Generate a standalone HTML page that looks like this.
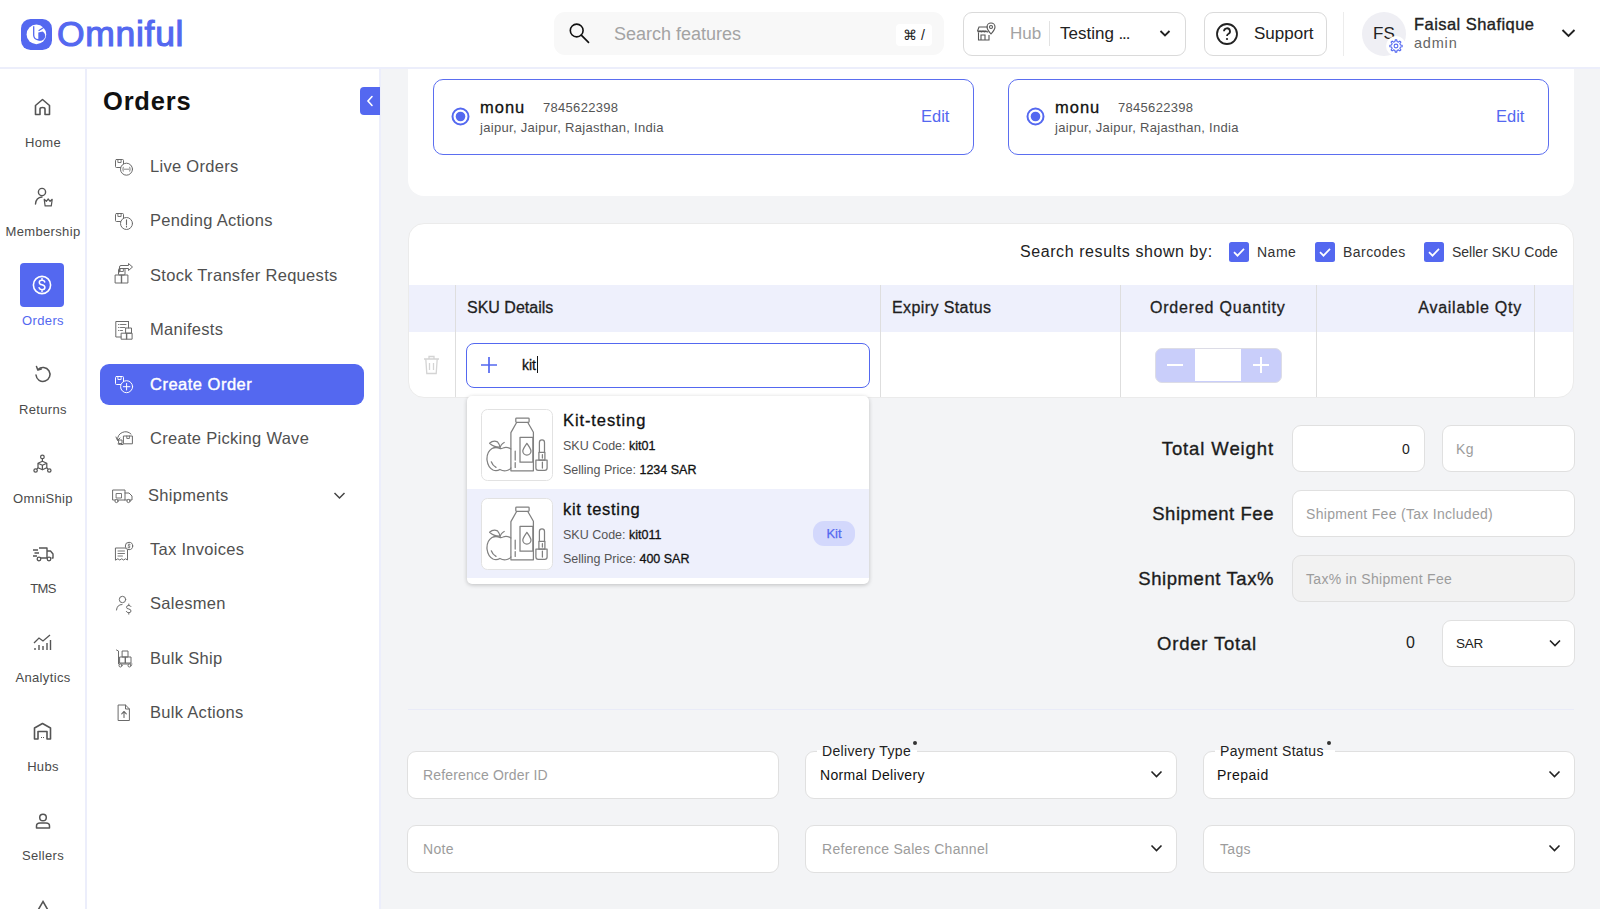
<!DOCTYPE html>
<html><head><meta charset="utf-8">
<style>
*{box-sizing:border-box;margin:0;padding:0}
html,body{width:1600px;height:909px;overflow:hidden;background:#f3f4f6;font-family:"Liberation Sans",sans-serif;color:#222}
.a{position:absolute}
svg{display:block}
/* header */
#hdr{left:0;top:0;width:1600px;height:69px;background:#fff;border-bottom:2px solid #eceefb}
.logo-t{left:57px;top:14px;font-size:35.5px;color:#5468f0;-webkit-text-stroke:1.1px #5468f0;letter-spacing:0.7px}
.med{-webkit-text-stroke:0.3px currentColor}
#search{left:554px;top:12px;width:390px;height:43px;background:#f8f8f8;border-radius:11px}
.ph{color:#a3a3a3}
.box{background:#fff;border:1px solid #dadada;border-radius:9px}
/* sidebar1 */
#sb1{left:0;top:69px;width:87px;height:840px;background:#fff;border-right:2px solid #eceefb}
.sb1i{position:absolute;left:0;width:86px;text-align:center;font-size:13px;color:#4a4a4a;letter-spacing:0.35px}
/* sidebar2 */
#sb2{left:87px;top:69px;width:294px;height:840px;background:#fff;border-right:2px solid #eceefb}
.mi{position:absolute;left:150px;font-size:16.5px;color:#505050;white-space:nowrap;letter-spacing:0.3px;margin-top:1px}
.mic{position:absolute;left:114px}
/* content */
.card{background:#fff;border-radius:16px}
.addr{background:#fff;border:1.5px solid #5b6ef0;border-radius:10px}
.th{font-size:16px;color:#1f1f1f;white-space:nowrap;-webkit-text-stroke:0.3px #1f1f1f}
.lbl{font-size:18.5px;color:#1c1c1c;white-space:nowrap;text-align:right;-webkit-text-stroke:0.35px #1c1c1c}
.inp{background:#fff;border:1.3px solid #e0e0e0;border-radius:9px}
.pht{font-size:14px;color:#9c9c9c;white-space:nowrap;letter-spacing:0.3px}
</style></head><body>

<!-- HEADER -->
<div id="hdr" class="a"></div>
<svg class="a" style="left:21px;top:18.5px" width="31" height="31" viewBox="0 0 31 31">
 <rect x="0" y="0" width="31" height="31" rx="9.5" fill="#5468f0"/>
 <circle cx="15.4" cy="15.4" r="9.8" fill="#fff"/>
 <path d="M12.7 7.2 V16.3 A4.7 4.7 0 0 0 22 17 A5 5 0 0 0 21.3 13.5" fill="none" stroke="#5468f0" stroke-width="1.3"/>
 <path d="M17.3 13.6 L21.6 12.6 A4.8 4.8 0 0 1 17.3 21.2 Z" fill="#5468f0"/>
 <path d="M17.6 11.8 L24.2 7.6" stroke="#5468f0" stroke-width="1.2"/>
</svg>
<div class="a logo-t">Omniful</div>

<div id="search" class="a"></div>
<svg class="a" style="left:565px;top:20px" width="26" height="26" viewBox="0 0 26 26"><circle cx="11.7" cy="10.5" r="6.4" fill="none" stroke="#111" stroke-width="1.6"/><path d="M16.3 15.2 L23.5 22.4" stroke="#111" stroke-width="1.7" stroke-linecap="round"/></svg>
<div class="a ph" style="left:614px;top:24px;font-size:18px">Search features</div>
<div class="a" style="left:896px;top:24px;width:36px;height:22px;background:#fff;border-radius:4px;font-size:14px;color:#222;text-align:center;line-height:22px">&#8984; /</div>

<div class="a box" style="left:963px;top:12px;width:223px;height:44px"></div>
<svg class="a" style="left:976px;top:22px" width="20" height="19" viewBox="0 0 20 19"><g fill="none" stroke="#555" stroke-width="1.1"><path d="M1.5 9 L3 5 H12 M1.5 9 Q2.5 11 4 9 Q5.5 11 7 9 Q8.5 11 10 9 Q11 10.5 12 9.5 M1.5 9 H10"/><path d="M2.5 10.5 V18 H13 V13 M5 18 V13 H9 V18"/><path d="M15 12 Q11 7.5 11 5 A4 4 0 0 1 19 5 Q19 7.5 15 12 Z"/><circle cx="15" cy="5" r="1.5"/></g></svg>
<div class="a ph" style="left:1010px;top:24px;font-size:17px">Hub</div>
<div class="a" style="left:1049px;top:21px;width:1px;height:25px;background:#e2e2e2"></div>
<div class="a" style="left:1060px;top:24px;font-size:17px;color:#222">Testing <span style="letter-spacing:-1.2px">...</span></div>
<svg class="a" style="left:1159px;top:29px" width="12" height="9" viewBox="0 0 12 9"><path d="M1.5 2 L6 6.5 L10.5 2" stroke="#222" stroke-width="1.8" fill="none"/></svg>

<div class="a box" style="left:1204px;top:12px;width:123px;height:44px"></div>
<svg class="a" style="left:1215px;top:22px" width="24" height="24" viewBox="0 0 24 24"><circle cx="12" cy="12" r="10" fill="none" stroke="#222" stroke-width="1.8"/><path d="M9 9.3 a3 3 0 1 1 4.2 2.7 c-1 .5 -1.2 1 -1.2 2" stroke="#222" stroke-width="1.8" fill="none"/><circle cx="12" cy="17" r="1.1" fill="#222"/></svg>
<div class="a" style="left:1254px;top:24px;font-size:17px;color:#222">Support</div>

<div class="a" style="left:1343px;top:12px;width:1px;height:44px;background:#ececec"></div>
<div class="a" style="left:1362px;top:12px;width:44px;height:44px;border-radius:50%;background:#efeff4"></div>
<div class="a" style="left:1373px;top:24px;font-size:17px;color:#222">FS</div>
<div class="a" style="left:1385.5px;top:35.5px;width:20px;height:20px;border-radius:50%;background:#fff"></div>
<svg class="a" style="left:1388.5px;top:38.5px" width="14" height="14" viewBox="0 0 14 14"><path d="M11.49 6.01 L13.15 6.20 L13.15 7.80 L11.49 7.99 L10.87 9.48 L11.91 10.78 L10.78 11.91 L9.48 10.87 L7.99 11.49 L7.80 13.15 L6.20 13.15 L6.01 11.49 L4.52 10.87 L3.22 11.91 L2.09 10.78 L3.13 9.48 L2.51 7.99 L0.85 7.80 L0.85 6.20 L2.51 6.01 L3.13 4.52 L2.09 3.22 L3.22 2.09 L4.52 3.13 L6.01 2.51 L6.20 0.85 L7.80 0.85 L7.99 2.51 L9.48 3.13 L10.78 2.09 L11.91 3.22 L10.87 4.52 Z" fill="none" stroke="#5468f0" stroke-width="1.1" stroke-linejoin="round"/><circle cx="7" cy="7" r="1.9" fill="none" stroke="#5468f0" stroke-width="1.1"/></svg>
<div class="a" style="left:1414px;top:15px;font-size:16.5px;color:#222;letter-spacing:0.45px;-webkit-text-stroke:0.35px #222">Faisal Shafique</div>
<div class="a" style="left:1414px;top:35px;font-size:14.5px;color:#666;letter-spacing:0.8px">admin</div>
<svg class="a" style="left:1561px;top:28px" width="15" height="10" viewBox="0 0 15 10"><path d="M1.5 2 L7.5 8 L13.5 2" stroke="#222" stroke-width="1.9" fill="none"/></svg>

<!-- SIDEBAR 1 -->
<div id="sb1" class="a"></div>
<!-- home -->
<svg class="a" style="left:34px;top:98px" width="17" height="18" viewBox="0 0 17 18"><path d="M1.5 16.5 V7.5 L8.5 1.5 L15.5 7.5 V16.5 H11 V11 Q11 9.5 8.5 9.5 Q6 9.5 6 11 V16.5 Z" fill="none" stroke="#555" stroke-width="1.6" stroke-linejoin="round"/></svg>
<div class="sb1i" style="top:135px">Home</div>
<!-- membership -->
<svg class="a" style="left:34px;top:187px" width="19" height="20" viewBox="0 0 19 20"><circle cx="8" cy="5" r="3.6" fill="none" stroke="#555" stroke-width="1.4"/><path d="M1.5 17 Q2 10.5 8 10" fill="none" stroke="#555" stroke-width="1.4" stroke-linecap="round"/><path d="M10.2 12.3 L12.3 14.3 L14.2 12 L16.1 14.3 L18.2 12.3 L17.3 18.8 H11.1 Z" fill="none" stroke="#555" stroke-width="1.2" stroke-linejoin="round"/></svg>
<div class="sb1i" style="top:224px">Membership</div>
<!-- orders active -->
<div class="a" style="left:20px;top:263px;width:44px;height:44px;background:#5468f0;border-radius:4px"></div>
<svg class="a" style="left:32px;top:275px" width="20" height="20" viewBox="0 0 20 20"><circle cx="10" cy="10" r="8.6" fill="none" stroke="#fff" stroke-width="1.6"/><path d="M12.8 7 Q12.3 5.3 10 5.3 Q7.3 5.3 7.3 7.4 Q7.3 9.2 10 9.8 Q12.9 10.4 12.9 12.5 Q12.9 14.7 10 14.7 Q7.6 14.7 7.1 12.8 M10 3.6 V5.3 M10 14.7 V16.4" fill="none" stroke="#fff" stroke-width="1.5" stroke-linecap="round"/></svg>
<div class="sb1i" style="top:313px;color:#5468f0">Orders</div>
<!-- returns -->
<svg class="a" style="left:34px;top:365px" width="18" height="19" viewBox="0 0 18 19"><path d="M4 4.5 A7 7 0 1 1 2 10" fill="none" stroke="#555" stroke-width="1.5" stroke-linecap="round"/><path d="M2.5 1.5 L3.8 5 L7.3 4" fill="none" stroke="#555" stroke-width="1.5" stroke-linecap="round" stroke-linejoin="round"/></svg>
<div class="sb1i" style="top:402px">Returns</div>
<!-- omniship -->
<svg class="a" style="left:25px;top:445px" width="36" height="36" viewBox="0 0 36 36"><g fill="none" stroke="#555" stroke-width="1.25" stroke-linejoin="round"><circle cx="17.4" cy="11.9" r="1.8"/><path d="M17.4 13.7 V16.2"/><path d="M17.4 16.2 L13 18.3 V22.8 L17.4 24.8 L21.8 22.8 V18.3 Z M13 18.3 L17.4 20.3 L21.8 18.3 M17.4 20.3 V24.8"/><path d="M13 22.8 L11.8 24.2 M21.8 22.8 L23 24.2"/><circle cx="10.6" cy="25.5" r="1.7"/><circle cx="24.3" cy="25.5" r="1.7"/></g></svg>
<div class="sb1i" style="top:491px">OmniShip</div>
<!-- tms -->
<svg class="a" style="left:32px;top:546px" width="22" height="16" viewBox="0 0 22 16"><path d="M7 2 H15 V12 H8 M15 5 H18.5 L21 8 V12 H19.5" fill="none" stroke="#555" stroke-width="1.4" stroke-linejoin="round"/><path d="M1 4 H6 M2.5 7 H7 M1 10 H5" stroke="#555" stroke-width="1.3"/><circle cx="7" cy="13" r="1.8" fill="#fff" stroke="#555" stroke-width="1.3"/><circle cx="17" cy="13" r="1.8" fill="#fff" stroke="#555" stroke-width="1.3"/></svg>
<div class="sb1i" style="top:581px;letter-spacing:-0.6px">TMS</div>
<!-- analytics -->
<svg class="a" style="left:33px;top:634px" width="19" height="17" viewBox="0 0 19 17"><path d="M1 9 L6 4 L10 7 L17 1" fill="none" stroke="#555" stroke-width="1.3"/><path d="M2 14 V16 M6 11 V16 M10 12 V16 M14 9 V16 M17.5 6 V16" stroke="#555" stroke-width="1.4"/></svg>
<div class="sb1i" style="top:670px">Analytics</div>
<!-- hubs -->
<svg class="a" style="left:33px;top:722px" width="19" height="18" viewBox="0 0 19 18"><path d="M1.5 17 V6 L9.5 1.5 L17.5 6 V17 H14 V9.5 H5 V17 Z" fill="none" stroke="#555" stroke-width="1.6" stroke-linejoin="round"/><path d="M8 15.5 H11" stroke="#555" stroke-width="1.2" stroke-dasharray="1 1"/></svg>
<div class="sb1i" style="top:759px">Hubs</div>
<!-- sellers -->
<svg class="a" style="left:35px;top:813px" width="16" height="16" viewBox="0 0 16 16"><circle cx="8" cy="4.5" r="3.3" fill="none" stroke="#555" stroke-width="1.5"/><path d="M1.5 15 V13 Q1.5 10 5 10 H11 Q14.5 10 14.5 13 V15 Z" fill="none" stroke="#555" stroke-width="1.5" stroke-linejoin="round"/></svg>
<div class="sb1i" style="top:848px">Sellers</div>
<svg class="a" style="left:36px;top:900px" width="14" height="12" viewBox="0 0 14 12"><path d="M7 1.5 L12.5 11 H1.5 Z" fill="none" stroke="#555" stroke-width="1.5"/></svg>


<!-- SIDEBAR 2 -->
<div id="sb2" class="a"></div>
<div class="a" style="left:103px;top:87px;font-size:25.5px;font-weight:bold;color:#111;letter-spacing:0.8px">Orders</div>
<div class="a" style="left:360px;top:87px;width:20px;height:28px;background:#5468f0;border-radius:4px 0 0 4px"></div>
<svg class="a" style="left:365px;top:95px" width="10" height="12" viewBox="0 0 10 12"><path d="M7 1.5 L3 6 L7 10.5" fill="none" stroke="#fff" stroke-width="1.6" stroke-linecap="round"/></svg>

<!-- live orders -->
<div class="mi" style="top:156px">Live Orders</div>
<!-- pending -->
<div class="mi" style="top:210px">Pending Actions</div>
<!-- stock transfer -->
<div class="mi" style="top:265px">Stock Transfer Requests</div>
<!-- manifests -->
<div class="mi" style="top:319px">Manifests</div>
<!-- create order active -->
<div class="a" style="left:100px;top:364px;width:264px;height:41px;background:#5468f0;border-radius:9px"></div>
<div class="mi" style="top:374px;color:#fff;-webkit-text-stroke:0.4px #fff;letter-spacing:0.5px">Create Order</div>
<!-- picking wave -->
<div class="mi" style="top:428px">Create Picking Wave</div>
<!-- shipments -->
<div class="mi" style="left:148px;top:485px">Shipments</div>
<svg class="a" style="left:333px;top:491px" width="13" height="9" viewBox="0 0 13 9"><path d="M1.5 2 L6.5 7 L11.5 2" fill="none" stroke="#444" stroke-width="1.5"/></svg>
<!-- tax invoices -->
<div class="mi" style="top:539px">Tax Invoices</div>
<!-- salesmen -->
<div class="mi" style="top:593px">Salesmen</div>
<!-- bulk ship -->
<div class="mi" style="top:648px">Bulk Ship</div>
<!-- bulk actions -->
<div class="mi" style="top:702px">Bulk Actions</div>


<svg class="a" style="left:0;top:0" width="380" height="909" viewBox="0 0 380 909"><g fill="none" stroke="#6a6a6a" stroke-width="1" stroke-linejoin="round" stroke-linecap="round">
<rect x="115.5" y="159.5" width="8" height="8" rx="1" fill="none" stroke="#6a6a6a"/><path d="M117.9 159.5 V162.5 H121.1 V159.5" fill="none" stroke="#6a6a6a" stroke-width="0.9"/><circle cx="126.5" cy="169.2" r="6" fill="#fff"/><path d="M124 169.2 H129 M123.2 167.2 Q122.4 169.2 123.2 171.2 M129.8 167.2 Q130.6 169.2 129.8 171.2" stroke-width="0.8"/>
<rect x="115.5" y="213.5" width="8" height="8" rx="1" fill="none" stroke="#6a6a6a"/><path d="M117.9 213.5 V216.5 H121.1 V213.5" fill="none" stroke="#6a6a6a" stroke-width="0.9"/><circle cx="126.5" cy="223.5" r="6" fill="#fff"/><path d="M126.5 219.8 V224.5 M126.5 226 V227" stroke-width="1.1"/>
<path d="M119.5 272 V267 Q119.5 265.5 121 265.5 H128.5 V263.5 L132.5 267 L128.5 270.5 V268.5 H122.5"/>
<rect x="118.5" y="268.5" width="6.5" height="6.5" rx="1" fill="none" stroke="#6a6a6a"/><path d="M120.15 268.5 V271.5 H123.35 V268.5" fill="none" stroke="#6a6a6a" stroke-width="0.9"/><rect x="115.5" y="275" width="6.2" height="8"/><rect x="121.7" y="275" width="6.2" height="8"/>
<path d="M124 321.5 H115.8 V337 H121 M128.5 321.5 V328 M124 321.5 H128.5"/><path d="M118.5 324.5 H119 M120.5 324.5 H126 M118.5 327.5 H119 M120.5 327.5 H125 M118.5 330.5 H119 M120.5 330.5 H122.5" stroke-width="0.9"/>
<rect x="121.5" y="333.2" width="5.3" height="6"/><rect x="126.8" y="333.2" width="5.3" height="6"/><rect x="126" y="328" width="5.5" height="5.2"/>
<rect x="115.5" y="376.5" width="8" height="8" rx="1" fill="none" stroke="#fff"/><path d="M117.9 376.5 V379.5 H121.1 V376.5" fill="none" stroke="#fff" stroke-width="0.9"/><circle cx="126.6" cy="386.7" r="6" fill="#5468f0" stroke="#fff"/><path d="M123.3 386.7 H129.9 M126.6 383.4 V390" stroke="#fff"/>
<path d="M117.5 440 A8 8 0 0 1 131 434" /><path d="M116 437 L117.5 440.5 L120 438"/><path d="M118 444 A8 8 0 0 0 123 444.5"/>
<rect x="123.8" y="436" width="8.6" height="7.8"/><path d="M126.8 436 V438.5 H129.4 V436" stroke-width="0.9"/><rect x="119" y="440" width="3" height="3.5"/>
<rect x="113" y="490" width="12" height="10"/><path d="M125 493 H129 L132 496 V500 H125"/><rect x="116.5" y="493.5" width="5" height="4.5" stroke-width="0.9"/><circle cx="116.5" cy="501" r="1.6" fill="#fff"/><circle cx="128.5" cy="501" r="1.6" fill="#fff"/>
<path d="M115.8 548 H127.5 V560 L125.5 558.8 L123.6 560 L121.7 558.8 L119.8 560 L117.8 558.8 L115.8 560 Z"/><path d="M118 551 H124.5 M118 553.5 H124.5 M118 556 H122.5" stroke-width="0.9"/><circle cx="129" cy="546" r="3.7" fill="#fff"/><path d="M129 543.8 V548.2 M130.2 544.6 Q129 544 128.2 544.8 Q127.8 545.8 129 546 Q130.3 546.3 129.9 547.3 Q129 548 127.9 547.4" stroke-width="0.7"/>
<circle cx="122.5" cy="599.5" r="3.2"/><path d="M116.5 610 Q117 604.5 122 604.5"/><path d="M131 606.5 Q130.5 605.5 128.8 605.5 Q126.5 605.5 126.5 607.2 Q126.5 608.8 128.8 609 Q131 609.3 131 611 Q131 612.7 128.8 612.7 Q126.8 612.7 126.3 611.5 M128.8 604 V605.5 M128.8 612.7 V614.2"/>
<path d="M116.5 650 L118.5 651 V664 H132"/><rect x="120" y="657" width="5.5" height="6"/><rect x="125.5" y="657" width="5.5" height="6"/><rect x="122.5" y="651" width="5.5" height="6"/><circle cx="120.5" cy="665.5" r="1.5" fill="#fff"/><circle cx="129.5" cy="665.5" r="1.5" fill="#fff"/>
<path d="M118.5 705 H125.5 L129.4 709 V720.5 H118.5 Z M125.5 705 V709 H129.4"/><path d="M124 717.5 V711.5 M121.7 713.8 L124 711.5 L126.3 713.8" stroke-width="1.1"/>
</g></svg>
<!-- CONTENT -->
<!-- top card -->
<div class="a card" style="left:408px;top:69px;width:1166px;height:127px;border-radius:0 0 16px 16px"></div>
<div class="a addr" style="left:433px;top:79px;width:541px;height:76px"></div>
<svg class="a" style="left:451px;top:107px" width="19" height="19" viewBox="0 0 19 19"><circle cx="9.5" cy="9.5" r="8" fill="none" stroke="#5468f0" stroke-width="2"/><circle cx="9.5" cy="9.5" r="4.8" fill="#5468f0"/></svg>
<div class="a med" style="left:480px;top:98px;font-size:16.5px;color:#111;letter-spacing:1px">monu</div>
<div class="a" style="left:543px;top:100px;font-size:13px;color:#555;letter-spacing:0.3px">7845622398</div>
<div class="a" style="left:480px;top:120px;font-size:13px;color:#555;letter-spacing:0.3px">jaipur, Jaipur, Rajasthan, India</div>
<div class="a" style="left:921px;top:107px;font-size:16.5px;color:#5468f0">Edit</div>

<div class="a addr" style="left:1008px;top:79px;width:541px;height:76px"></div>
<svg class="a" style="left:1026px;top:107px" width="19" height="19" viewBox="0 0 19 19"><circle cx="9.5" cy="9.5" r="8" fill="none" stroke="#5468f0" stroke-width="2"/><circle cx="9.5" cy="9.5" r="4.8" fill="#5468f0"/></svg>
<div class="a med" style="left:1055px;top:98px;font-size:16.5px;color:#111;letter-spacing:1px">monu</div>
<div class="a" style="left:1118px;top:100px;font-size:13px;color:#555;letter-spacing:0.3px">7845622398</div>
<div class="a" style="left:1055px;top:120px;font-size:13px;color:#555;letter-spacing:0.3px">jaipur, Jaipur, Rajasthan, India</div>
<div class="a" style="left:1496px;top:107px;font-size:16.5px;color:#5468f0">Edit</div>

<!-- sku card -->
<div class="a card" style="left:408px;top:223px;width:1166px;height:175px;overflow:hidden;border:1px solid #ebebeb">
  <div class="a" style="left:0;top:61px;width:1166px;height:47px;background:#eef0fc"></div>
  <div class="a" style="left:46px;top:61px;width:1px;height:113px;background:#dedede"></div>
  <div class="a" style="left:471px;top:61px;width:1px;height:113px;background:#dedede"></div>
  <div class="a" style="left:711px;top:61px;width:1px;height:113px;background:#dedede"></div>
  <div class="a" style="left:907px;top:61px;width:1px;height:113px;background:#dedede"></div>
  <div class="a" style="left:1125px;top:61px;width:1px;height:113px;background:#dedede"></div>
</div>
<div class="a" style="left:1020px;top:243px;font-size:16px;color:#222;letter-spacing:0.58px">Search results shown by:</div>
<svg class="a" style="left:1229px;top:242px" width="20" height="20" viewBox="0 0 20 20"><rect width="20" height="20" rx="2.5" fill="#5468f0"/><path d="M5 10.2 L8.5 13.7 L15 6.8" fill="none" stroke="#fff" stroke-width="1.7"/></svg>
<div class="a" style="left:1257px;top:244px;font-size:14px;color:#333;letter-spacing:0.5px">Name</div>
<svg class="a" style="left:1315px;top:242px" width="20" height="20" viewBox="0 0 20 20"><rect width="20" height="20" rx="2.5" fill="#5468f0"/><path d="M5 10.2 L8.5 13.7 L15 6.8" fill="none" stroke="#fff" stroke-width="1.7"/></svg>
<div class="a" style="left:1343px;top:244px;font-size:14px;color:#333;letter-spacing:0.45px">Barcodes</div>
<svg class="a" style="left:1424px;top:242px" width="20" height="20" viewBox="0 0 20 20"><rect width="20" height="20" rx="2.5" fill="#5468f0"/><path d="M5 10.2 L8.5 13.7 L15 6.8" fill="none" stroke="#fff" stroke-width="1.7"/></svg>
<div class="a" style="left:1452px;top:244px;font-size:14px;color:#333">Seller SKU Code</div>

<div class="a th" style="left:467px;top:299px">SKU Details</div>
<div class="a th" style="left:892px;top:299px;letter-spacing:0.4px">Expiry Status</div>
<div class="a th" style="left:1150px;top:299px;letter-spacing:0.8px">Ordered Quantity</div>
<div class="a th" style="left:1322px;width:200px;text-align:right;top:299px;letter-spacing:0.75px">Available Qty</div>

<svg class="a" style="left:423px;top:355px" width="17" height="20" viewBox="0 0 17 20"><path d="M1 4 H16 M6 4 V1.5 H11 V4 M2.8 4 L3.8 18.5 H13.2 L14.2 4 M6.5 8 V15 M10.5 8 V15" fill="none" stroke="#d4d4d4" stroke-width="1.3"/></svg>
<div class="a" style="left:466px;top:343px;width:404px;height:45px;background:#fff;border:1.3px solid #5468f0;border-radius:8px"></div>
<svg class="a" style="left:480px;top:356px" width="18" height="18" viewBox="0 0 18 18"><path d="M9 1 V17 M1 9 H17" stroke="#5468f0" stroke-width="1.7"/></svg>
<div class="a med" style="left:522px;top:357px;font-size:14px;color:#111">kit</div>
<div class="a" style="left:537px;top:356px;width:1px;height:17px;background:#111"></div>

<div class="a" style="left:1155px;top:348px;width:127px;height:35px;background:#c9cefa;border-radius:7px;border:1px solid #dcdce6"></div>
<div class="a" style="left:1195px;top:349px;width:46px;height:32px;background:#fff"></div>
<svg class="a" style="left:1165px;top:356px" width="20" height="18" viewBox="0 0 20 18"><path d="M2 9 H18" stroke="#fff" stroke-width="2"/></svg>
<svg class="a" style="left:1251px;top:355px" width="20" height="20" viewBox="0 0 20 20"><path d="M2 10 H18 M10 2 V18" stroke="#fff" stroke-width="2"/></svg>

<!-- dropdown -->
<div class="a" style="left:467px;top:396px;width:402px;height:188px;background:#fff;border-radius:5px;box-shadow:0 1px 4px rgba(0,0,0,0.22)"></div>
<div class="a" style="left:467px;top:489px;width:402px;height:89px;background:#eef0fc"></div>
<svg class="a" style="left:480.5px;top:409px" width="72" height="72" viewBox="0 0 72 72"><rect x="0.5" y="0.5" width="71" height="71" rx="6" fill="#fff" stroke="#e2e2e2"/>
<g fill="none" stroke="#808080" stroke-width="1.25" stroke-linejoin="round" stroke-linecap="round">
<rect x="34.8" y="9" width="13.3" height="4.3" rx="0.8"/>
<path d="M35.6 13.5 L29.9 23.6 V61.8 H52.4 V23.2 L46.8 13.5"/>
<rect x="39" y="28.3" width="12.9" height="24.9"/>
<path d="M45.9 34.3 Q41.8 40 41.8 42 A4.1 4.1 0 0 0 50 42 Q50 40 45.9 34.3 Z"/>
<path d="M34.2 42 V51 M34.2 53.5 V58.4"/>
<path d="M29.9 40 Q26 37.5 22 39 Q19 40 18.9 39.5 Q15 37.5 11 39.5 Q5.5 43 6 51 Q7 58.5 12 61 Q15.5 62.5 18.9 60.5 Q22.5 62.5 26 61.5 Q28.5 61 29.9 59"/>
<path d="M10.3 52.8 Q11.5 56.5 15 58.4"/>
<path d="M18.9 39.5 Q19.5 35.5 23.2 33.5"/>
<path d="M8.6 34.3 Q12 31 16.5 32.8 Q18.5 35 18.9 38.2 Q13 38.5 8.6 34.3 Z"/>
<path d="M58.4 43.3 V33.5 Q58.4 30.9 61 30.9 Q63.5 30.9 63.5 33.5 V43.3"/>
<rect x="57.9" y="43.3" width="6" height="7.7"/>
<path d="M54.9 51 H66.1 V59 Q66.1 61.4 63.7 61.4 H57.3 Q54.9 61.4 54.9 59 Z"/>
<path d="M61.4 45.5 V49 M61.4 53 V59"/>
</g></svg>
<svg class="a" style="left:480.5px;top:498px" width="72" height="72" viewBox="0 0 72 72"><rect x="0.5" y="0.5" width="71" height="71" rx="6" fill="#fff" stroke="#e2e2e2"/>
<g fill="none" stroke="#808080" stroke-width="1.25" stroke-linejoin="round" stroke-linecap="round">
<rect x="34.8" y="9" width="13.3" height="4.3" rx="0.8"/>
<path d="M35.6 13.5 L29.9 23.6 V61.8 H52.4 V23.2 L46.8 13.5"/>
<rect x="39" y="28.3" width="12.9" height="24.9"/>
<path d="M45.9 34.3 Q41.8 40 41.8 42 A4.1 4.1 0 0 0 50 42 Q50 40 45.9 34.3 Z"/>
<path d="M34.2 42 V51 M34.2 53.5 V58.4"/>
<path d="M29.9 40 Q26 37.5 22 39 Q19 40 18.9 39.5 Q15 37.5 11 39.5 Q5.5 43 6 51 Q7 58.5 12 61 Q15.5 62.5 18.9 60.5 Q22.5 62.5 26 61.5 Q28.5 61 29.9 59"/>
<path d="M10.3 52.8 Q11.5 56.5 15 58.4"/>
<path d="M18.9 39.5 Q19.5 35.5 23.2 33.5"/>
<path d="M8.6 34.3 Q12 31 16.5 32.8 Q18.5 35 18.9 38.2 Q13 38.5 8.6 34.3 Z"/>
<path d="M58.4 43.3 V33.5 Q58.4 30.9 61 30.9 Q63.5 30.9 63.5 33.5 V43.3"/>
<rect x="57.9" y="43.3" width="6" height="7.7"/>
<path d="M54.9 51 H66.1 V59 Q66.1 61.4 63.7 61.4 H57.3 Q54.9 61.4 54.9 59 Z"/>
<path d="M61.4 45.5 V49 M61.4 53 V59"/>
</g></svg>

<div style="left:563px;top:411px;font-size:16.5px;color:#111;letter-spacing:0.9px" class="a med">Kit-testing</div>
<div class="a" style="left:563px;top:439px;font-size:12.5px;color:#555">SKU Code: <span class="med" style="color:#111">kit01</span></div>
<div class="a" style="left:563px;top:463px;font-size:12.5px;color:#555">Selling Price: <span class="med" style="color:#111">1234 SAR</span></div>
<div style="left:563px;top:500px;font-size:16.5px;color:#111;letter-spacing:0.7px" class="a med">kit testing</div>
<div class="a" style="left:563px;top:528px;font-size:12.5px;color:#555">SKU Code: <span class="med" style="color:#111">kit011</span></div>
<div class="a" style="left:563px;top:552px;font-size:12.5px;color:#555">Selling Price: <span class="med" style="color:#111">400 SAR</span></div>
<div class="a" style="left:813px;top:521px;width:42px;height:25px;background:#d3d8fc;border-radius:11px;font-size:13px;color:#5468f0;text-align:center;line-height:25px;-webkit-text-stroke:0.25px #5468f0">Kit</div>

<!-- summary -->
<div class="a lbl" style="left:1060px;top:438px;width:214px;letter-spacing:0.9px">Total Weight</div>
<div class="a inp" style="left:1292px;top:425px;width:133px;height:47px"></div>
<div class="a" style="left:1402px;top:441px;font-size:14px;color:#222">0</div>
<div class="a inp" style="left:1442px;top:425px;width:133px;height:47px"></div>
<div class="a pht" style="left:1456px;top:441px">Kg</div>

<div class="a lbl" style="left:1060px;top:503px;width:214px;letter-spacing:0.55px">Shipment Fee</div>
<div class="a inp" style="left:1292px;top:490px;width:283px;height:47px"></div>
<div class="a pht" style="left:1306px;top:506px;letter-spacing:0.3px">Shipment Fee (Tax Included)</div>

<div class="a lbl" style="left:1060px;top:568px;width:214px;letter-spacing:0.58px">Shipment Tax%</div>
<div class="a inp" style="left:1292px;top:555px;width:283px;height:47px;background:#f2f2f2"></div>
<div class="a pht" style="left:1306px;top:571px">Tax% in Shipment Fee</div>

<div class="a lbl" style="left:1060px;top:633px;width:197px;letter-spacing:0.8px">Order Total</div>
<div class="a" style="left:1406px;top:634px;font-size:16px;color:#222">0</div>
<div class="a inp" style="left:1442px;top:620px;width:133px;height:47px"></div>
<div class="a" style="left:1456px;top:636px;font-size:13.5px;color:#222;letter-spacing:-0.2px">SAR</div>
<svg class="a" style="left:1549px;top:639px" width="12" height="8" viewBox="0 0 12 8"><path d="M1 1.5 L6 6.5 L11 1.5" fill="none" stroke="#222" stroke-width="1.6"/></svg>

<div class="a" style="left:408px;top:709px;width:1166px;height:1px;background:#e9ebf8"></div>

<!-- bottom form -->
<div class="a inp" style="left:407px;top:751px;width:372px;height:48px"></div>
<div class="a pht" style="left:423px;top:767px;letter-spacing:0.15px">Reference Order ID</div>
<div class="a inp" style="left:805px;top:751px;width:372px;height:48px"></div>
<div class="a" style="left:817px;top:750px;width:100px;height:4px;background:#fff"></div>
<div class="a" style="left:822px;top:743px;font-size:14px;color:#222;letter-spacing:0.35px">Delivery Type<span style="position:absolute;left:91px;top:-2px;width:4px;height:4px;border-radius:50%;background:#333"></span></div>
<div class="a" style="left:820px;top:767px;font-size:14px;color:#111;letter-spacing:0.35px">Normal Delivery</div>
<svg class="a" style="left:1150px;top:770px" width="13" height="9" viewBox="0 0 13 9"><path d="M1.5 1.5 L6.5 6.5 L11.5 1.5" fill="none" stroke="#222" stroke-width="1.6"/></svg>
<div class="a inp" style="left:1203px;top:751px;width:372px;height:48px"></div>
<div class="a" style="left:1215px;top:750px;width:120px;height:4px;background:#fff"></div>
<div class="a" style="left:1220px;top:743px;font-size:14px;color:#222;letter-spacing:0.35px">Payment Status<span style="position:absolute;left:107px;top:-2px;width:4px;height:4px;border-radius:50%;background:#333"></span></div>
<div class="a" style="left:1217px;top:767px;font-size:14px;color:#111;letter-spacing:0.5px">Prepaid</div>
<svg class="a" style="left:1548px;top:770px" width="13" height="9" viewBox="0 0 13 9"><path d="M1.5 1.5 L6.5 6.5 L11.5 1.5" fill="none" stroke="#222" stroke-width="1.6"/></svg>

<div class="a inp" style="left:407px;top:825px;width:372px;height:48px"></div>
<div class="a pht" style="left:423px;top:841px">Note</div>
<div class="a inp" style="left:805px;top:825px;width:372px;height:48px"></div>
<div class="a pht" style="left:822px;top:841px">Reference Sales Channel</div>
<svg class="a" style="left:1150px;top:844px" width="13" height="9" viewBox="0 0 13 9"><path d="M1.5 1.5 L6.5 6.5 L11.5 1.5" fill="none" stroke="#222" stroke-width="1.6"/></svg>
<div class="a inp" style="left:1203px;top:825px;width:372px;height:48px"></div>
<div class="a pht" style="left:1220px;top:841px">Tags</div>
<svg class="a" style="left:1548px;top:844px" width="13" height="9" viewBox="0 0 13 9"><path d="M1.5 1.5 L6.5 6.5 L11.5 1.5" fill="none" stroke="#222" stroke-width="1.6"/></svg>


</body></html>
